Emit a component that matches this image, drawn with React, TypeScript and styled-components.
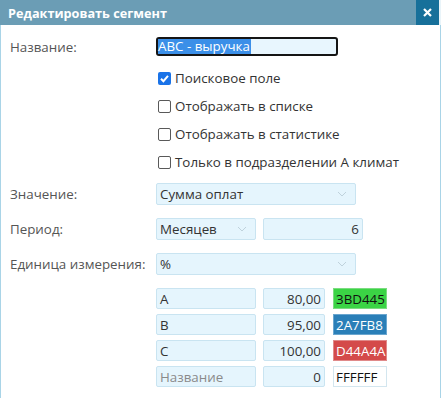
import React from "react";
import styled, { createGlobalStyle } from "styled-components";

const Global = createGlobalStyle`
  html, body { margin: 0; padding: 0; background: #fff; }
  body { font-family: "Open Sans", "Noto Sans", sans-serif; font-size: 13.35px; color: #333; }
  * { box-sizing: border-box; }
`;

const Dialog = styled.div`
  width: 441px;
  height: 398px;
  display: flex;
  flex-direction: column;
  background: #fff;
`;

const TitleBar = styled.div`
  height: 25px;
  display: flex;
  align-items: center;
  background: #6b9db5;
  border-right: 2px solid #e9f4f9;
  flex: none;
`;

const Title = styled.div`
  flex: 1;
  padding-left: 8px;
  color: #fff;
  font-weight: 700;
  font-size: 12.7px;
`;

const Close = styled.div`
  width: 23px;
  height: 25px;
  background: #17709a;
  display: flex;
  align-items: center;
  justify-content: center;
`;

const Body = styled.div`
  flex: 1;
  border-left: 1px solid #a9d4e7;
  border-right: 1px solid #a9d4e7;
  padding: 12px 0 0 9px;
  display: flex;
  flex-direction: column;
`;

const Row = styled.div<{ $h: number; $mt?: number }>`
  display: flex;
  align-items: center;
  height: ${(p) => p.$h}px;
  margin-top: ${(p) => p.$mt ?? 0}px;
`;

const Label = styled.div`
  width: 146px;
  color: #555;
  flex: none;
`;

const Controls = styled.div`
  display: flex;
  align-items: center;
  height: 100%;
  gap: 7px;
`;

const CheckList = styled.div`
  margin-top: 8px;
`;

const Field = styled.div<{ $w: number; $align?: string; $muted?: boolean }>`
  width: ${(p) => p.$w}px;
  height: 100%;
  background: #e5f5fd;
  border: 1px solid #c9e4f1;
  border-radius: 2px;
  display: flex;
  align-items: center;
  justify-content: ${(p) => (p.$align === "right" ? "flex-end" : "space-between")};
  padding: 0 3px 0 3px;
  color: ${(p) => (p.$muted ? "#8a8a8a" : "#333")};
  white-space: nowrap;
  overflow: hidden;
`;

const FocusField = styled.div`
  width: 182px;
  height: 19px;
  background: #e8f6fe;
  border: 2px solid #151515;
  border-radius: 3px;
  display: flex;
  align-items: center;
`;

const Selected = styled.span`
  background: #3b8fe8;
  color: #fff;
  line-height: 15px;
  padding-right: 1px;
`;

const Chevron = styled.svg`
  flex: none;
  margin-right: 5px;
`;

const Swatch = styled.div<{ $bg: string; $fg: string; $bd: string }>`
  width: 54px;
  height: 100%;
  background: ${(p) => p.$bg};
  color: ${(p) => p.$fg};
  border: 1px solid ${(p) => p.$bd};
  display: flex;
  align-items: center;
  padding-left: 2px;
  margin-left: 1px;
`;

const CheckRow = styled.div`
  display: flex;
  align-items: center;
  height: 28px;
  padding-left: 148px;
  gap: 4px;
  color: #333;
`;

const Box = styled.span<{ $on?: boolean }>`
  width: 13px;
  height: 13px;
  border-radius: 2px;
  flex: none;
  display: flex;
  align-items: center;
  justify-content: center;
  background: ${(p) => (p.$on ? "#1a73e8" : "#fff")};
  border: ${(p) => (p.$on ? "none" : "1px solid #595959")};
`;

const Down = () => (
  <Chevron width="10" height="6" viewBox="0 0 10 6">
    <path d="M1 1 L5 5 L9 1" fill="none" stroke="#bfd2dc" strokeWidth="1" />
  </Chevron>
);

const Check = ({ on, text }: { on?: boolean; text: string }) => (
  <CheckRow>
    <Box $on={on}>
      {on && (
        <svg width="11" height="11" viewBox="0 0 11 11">
          <path d="M2 5.8 L4.4 8.2 L9 2.8" fill="none" stroke="#fff" strokeWidth="2" />
        </svg>
      )}
    </Box>
    <span>{text}</span>
  </CheckRow>
);

const rows = [
  { n: "A", v: "80,00", c: "3BD445", bg: "#3bd445", fg: "#111", bd: "#7bdc80" },
  { n: "B", v: "95,00", c: "2A7FB8", bg: "#2a7fb8", fg: "#fff", bd: "#6aa6cf" },
  { n: "C", v: "100,00", c: "D44A4A", bg: "#d44a4a", fg: "#fff", bd: "#e08a8a" },
];

export default function App() {
  return (
    <>
      <Global />
      <Dialog>
        <TitleBar>
          <Title>Редактировать сегмент</Title>
          <Close>
            <svg width="9" height="9" viewBox="0 0 9 9">
              <path d="M1 1 L8 8 M8 1 L1 8" stroke="#fff" strokeWidth="2.2" />
            </svg>
          </Close>
        </TitleBar>
        <Body>
          <Row $h={19}>
            <Label>Название:</Label>
            <FocusField>
              <Selected>ABC - выручка</Selected>
            </FocusField>
          </Row>
          <CheckList>
            <Check on text="Поисковое поле" />
            <Check text="Отображать в списке" />
            <Check text="Отображать в статистике" />
            <Check text="Только в подразделении А климат" />
          </CheckList>
          <Row $h={22} $mt={7}>
            <Label>Значение:</Label>
            <Field $w={200}>
              <span>Сумма оплат</span>
              <Down />
            </Field>
          </Row>
          <Row $h={22} $mt={13}>
            <Label>Период:</Label>
            <Controls>
              <Field $w={100}>
                <span>Месяцев</span>
                <Down />
              </Field>
              <Field $w={100} $align="right">
                6
              </Field>
            </Controls>
          </Row>
          <Row $h={22} $mt={13}>
            <Label>Единица измерения:</Label>
            <Field $w={200}>
              <span>%</span>
              <Down />
            </Field>
          </Row>
          {rows.map((r, i) => (
            <Row key={r.n} $h={21} $mt={i === 0 ? 13 : 5}>
              <Label />
              <Controls>
                <Field $w={100}>{r.n}</Field>
                <Field $w={62} $align="right">
                  {r.v}
                </Field>
                <Swatch $bg={r.bg} $fg={r.fg} $bd={r.bd}>
                  {r.c}
                </Swatch>
              </Controls>
            </Row>
          ))}
          <Row $h={21} $mt={5}>
            <Label />
            <Controls>
              <Field $w={100} $muted>
                Название
              </Field>
              <Field $w={62} $align="right">
                0
              </Field>
              <Swatch $bg="#fff" $fg="#111" $bd="#d3e6ef">
                FFFFFF
              </Swatch>
            </Controls>
          </Row>
        </Body>
      </Dialog>
    </>
  );
}
